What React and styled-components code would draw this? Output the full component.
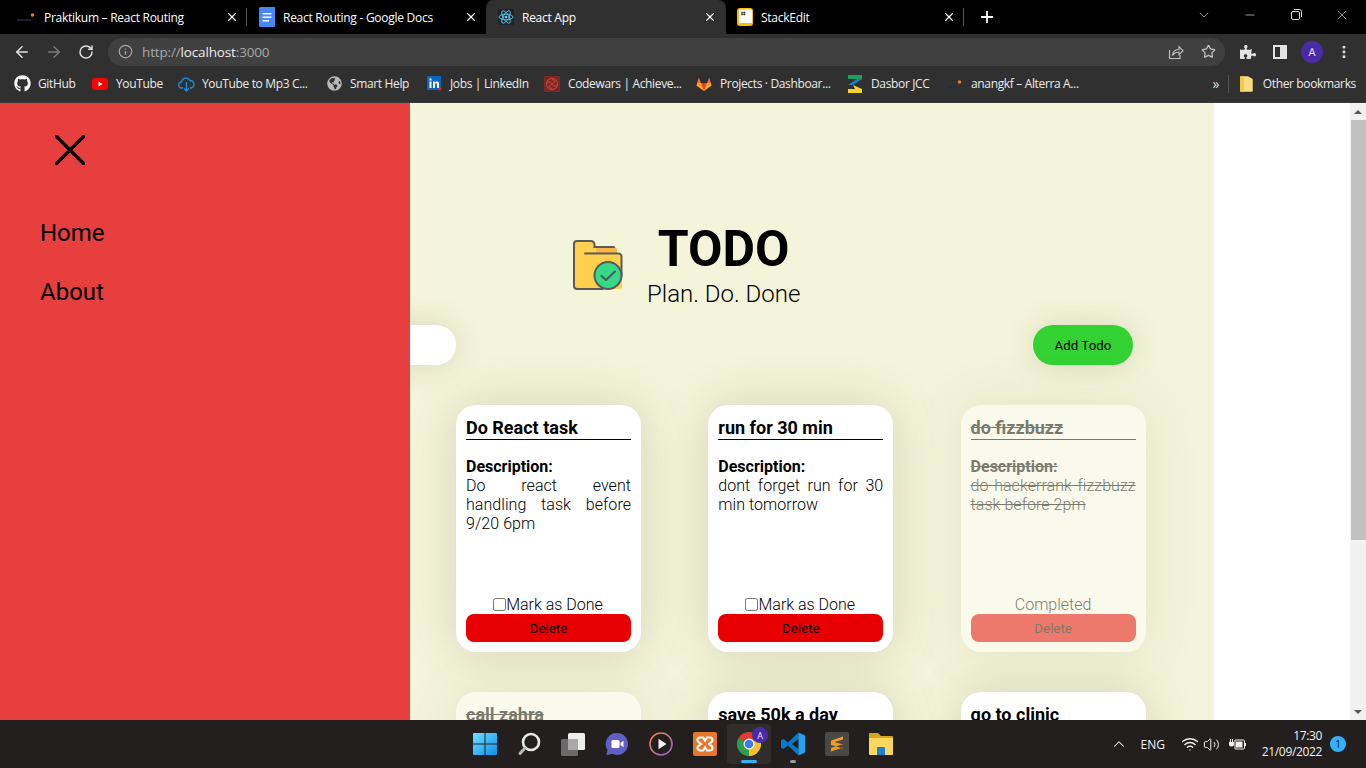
import React from 'react';
import styled, { createGlobalStyle } from 'styled-components';
import { ArrowLeft, ArrowRight, RotateCw, Info, Star, X, Plus, ChevronDown, ChevronUp, Minus, MoreVertical, Wifi, Volume2 } from 'lucide-react';
import { FaGithub, FaPuzzlePiece, FaGlobeAmericas } from 'react-icons/fa';

const GlobalStyle = createGlobalStyle`
  html, body {
    margin: 0;
    height: 100%;
    overflow: hidden;
    font-family: Roboto, "Liberation Sans", sans-serif;
  }
`;

const Screen = styled.div`
  width: 1366px;
  height: 768px;
  display: flex;
  flex-direction: column;
  overflow: hidden;
  background: #fff;
`;

/* browser chrome */
const TabStrip = styled.div`
  height: 34px;
  flex: none;
  background: #000;
  display: flex;
  padding-left: 8px;
  color: #fff;
  font: 12px "Open Sans", sans-serif;
`;

const Tab = styled.div`
  width: ${p => p.$w}px;
  box-sizing: border-box;
  display: flex;
  align-items: center;
  padding: 0 ${p => p.$pr}px 0 ${p => p.$pl}px;
  gap: 8px;
  position: relative;
  background: ${p => (p.$active ? '#303030' : 'transparent')};
  border-radius: ${p => (p.$active ? '8px 8px 0 0' : '0')};
  &::after {
    content: '';
    display: ${p => (p.$sep ? 'block' : 'none')};
    position: absolute;
    right: 0;
    top: 8px;
    bottom: 8px;
    width: 1px;
    background: #555;
  }
`;

const TabTitle = styled.span`
  flex: 1;
  white-space: nowrap;
  overflow: hidden;
  letter-spacing: -0.27px;
`;

const NewTab = styled.div`
  margin-left: 14px;
  display: flex;
  align-items: center;
`;

const WindowControls = styled.div`
  margin-left: auto;
  display: flex;
  align-items: flex-start;
  color: #ddd;
`;

const WindowButton = styled.div`
  width: 46px;
  height: 29px;
  display: flex;
  align-items: center;
  justify-content: center;
  position: relative;
  left: -1px;
`;

const Toolbar = styled.div`
  height: 35px;
  flex: none;
  background: #303030;
  display: flex;
  align-items: center;
  padding-left: 6px;
  color: #dcdcdc;
`;

const NavButton = styled.div`
  width: 32px;
  display: flex;
  justify-content: center;
  color: ${p => (p.$off ? '#7c7c7c' : '#e0e0e0')};
`;

const AddressBar = styled.div`
  margin-left: 6px;
  width: 1117px;
  height: 28px;
  box-sizing: border-box;
  border-radius: 14px;
  background: #404040;
  display: flex;
  align-items: center;
  padding: 0 1px 0 10px;
  font: 13.5px "Open Sans", sans-serif;
  letter-spacing: -0.15px;
  color: #a8a8a8;
  gap: 9px;
`;

const Url = styled.span`
  flex: 1;
  b {
    font-weight: 400;
    color: #ececec;
  }
`;

const AddressActions = styled.div`
  display: flex;
`;

const AddressAction = styled.div`
  width: 32px;
  display: flex;
  justify-content: center;
  color: #c4c4c4;
`;

const ToolbarActions = styled.div`
  margin-left: 7px;
  display: flex;
  align-items: center;
`;

const ToolbarAction = styled.div`
  width: 32px;
  display: flex;
  justify-content: center;
  color: #e2e2e2;
`;

const Avatar = styled.div`
  width: 22px;
  height: 22px;
  border-radius: 50%;
  background: #4a2ba6;
  color: #e8e4f8;
  font: 11px "Open Sans", sans-serif;
  display: flex;
  align-items: center;
  justify-content: center;
`;

const Bookmarks = styled.div`
  height: 34px;
  flex: none;
  box-sizing: border-box;
  background: #303030;
  border-bottom: 1px solid #3c3c3c;
  display: flex;
  align-items: center;
  padding: 0 0 4px 14px;
  color: #ececec;
  font: 12px "Open Sans", sans-serif;
  letter-spacing: -0.35px;
`;

const Bookmark = styled.div`
  width: ${p => p.$w}px;
  flex: none;
  display: flex;
  align-items: center;
  gap: ${p => p.$gap || 8}px;
  white-space: nowrap;
`;

const BookmarkEnd = styled.div`
  margin-left: auto;
  display: flex;
  align-items: center;
  padding-right: 10px;
`;

const Overflow = styled.span`
  font-size: 14px;
  color: #ddd;
  margin-right: 9px;
`;

const Divider = styled.span`
  width: 1px;
  height: 18px;
  background: #555;
  margin-right: 11px;
`;

/* page */
const Content = styled.div`
  flex: 1;
  min-height: 0;
  position: relative;
  display: flex;
  overflow: hidden;
`;

const Sidebar = styled.aside`
  position: absolute;
  z-index: 2;
  left: 0;
  top: 0;
  bottom: 0;
  width: 410px;
  box-sizing: border-box;
  background: #e73e3e;
  padding: 32px 0 0 40px;
`;

const CloseIcon = styled.svg`
  display: block;
  margin: 0 0 54px 15px;
`;

const NavLink = styled.div`
  font-size: 24px;
  line-height: 28px;
  color: #000;
  margin-bottom: 31px;
`;

const Main = styled.main`
  width: 1214px;
  flex: none;
  box-sizing: border-box;
  background: #f4f4da;
  padding-top: 118px;
`;

const Header = styled.header`
  display: flex;
  align-items: center;
  padding-left: 573px;
  gap: 24px;
`;

const HeaderText = styled.div`
  text-align: center;
  width: 153px;
`;

const Title = styled.h1`
  margin: 0 0 3px;
  font-size: 50px;
  line-height: 56px;
  font-weight: 700;
  color: #000;
`;

const Subtitle = styled.div`
  font-size: 24px;
  line-height: 28px;
  font-weight: 300;
  white-space: nowrap;
  color: #000;
`;

const AddRow = styled.div`
  display: flex;
  justify-content: space-between;
  padding: 0 81px 0 85px;
  margin: 17px 0 40px;
`;

const TodoInput = styled.div`
  width: 371px;
  height: 40px;
  background: #fff;
  border-radius: 20px;
  box-shadow: 0 0 30px rgba(90, 90, 50, 0.18);
`;

const AddButton = styled.div`
  width: 100px;
  height: 40px;
  border-radius: 20px;
  background: #32d232;
  color: #000;
  font-size: 13.33px;
  display: flex;
  align-items: center;
  justify-content: center;
  box-shadow: 0 0 30px rgba(90, 90, 50, 0.18);
`;

const CardGrid = styled.div`
  display: grid;
  grid-template-columns: repeat(3, 185px);
  column-gap: 67.3px;
  row-gap: 40px;
  padding-left: 456px;
`;

const Card = styled.article`
  height: 247px;
  box-sizing: border-box;
  padding: 10px;
  background: #fff;
  border-radius: 20px;
  box-shadow: 0 0 50px rgba(90, 90, 50, 0.2);
  display: flex;
  flex-direction: column;
  color: #000;
  opacity: ${p => (p.$done ? 0.5 : 1)};
`;

const CardTitle = styled.h3`
  margin: 0 0 17px;
  padding-top: 2px;
  font-size: 18px;
  line-height: 22px;
  font-weight: 700;
  border-bottom: 1px solid #000;
  text-decoration: ${p => (p.$done ? 'line-through' : 'none')};
`;

const CardBody = styled.div`
  flex: 1;
  font-size: 16px;
  line-height: 19px;
  text-align: justify;
  font-weight: 300;
  letter-spacing: 0.05px;
  text-decoration: ${p => (p.$done ? 'line-through' : 'none')};
  strong {
    display: block;
    font-weight: 700;
    letter-spacing: 0;
  }
`;

const CardStatus = styled.label`
  font-size: 16px;
  line-height: 19px;
  font-weight: 300;
  text-align: center;
  padding-right: ${p => (p.$done ? 0 : 1)}px;
  input {
    margin: 0;
    width: 13px;
    height: 13px;
    vertical-align: -1px;
  }
`;

const DeleteButton = styled.div`
  height: 28px;
  flex: none;
  border-radius: 8px;
  background: #e80000;
  color: #000;
  font-size: 13.33px;
  display: flex;
  align-items: center;
  justify-content: center;
`;

const Scrollbar = styled.div`
  margin-left: auto;
  width: 16px;
  flex: none;
  background: #f1f1f1;
  display: flex;
  flex-direction: column;
  align-items: center;
`;

const ScrollArrow = styled.div`
  height: 17px;
  flex: none;
  display: flex;
  align-items: center;
  justify-content: center;
  margin-top: ${p => (p.$down ? 'auto' : '0')};
  &::before {
    content: '';
    border-left: 4px solid transparent;
    border-right: 4px solid transparent;
    ${p => (p.$down ? 'border-top' : 'border-bottom')}: 4px solid #555;
  }
`;

const ScrollThumb = styled.div`
  width: 15px;
  height: 420px;
  background: #c1c1c1;
  margin-left: 1px;
`;

/* windows taskbar */
const Taskbar = styled.footer`
  height: 48px;
  flex: none;
  background: #231f1f;
  display: grid;
  grid-template-columns: 1fr auto 1fr;
  align-items: center;
  color: #f2f2f2;
  font: 12px "Open Sans", sans-serif;
`;

const TaskIcons = styled.div`
  grid-column: 2;
  display: flex;
`;

const TaskSlot = styled.div`
  width: 44px;
  height: 40px;
  display: flex;
  align-items: center;
  justify-content: center;
  position: relative;
  box-sizing: border-box;
  border-radius: 4px;
  background: ${p => (p.$active ? '#302d2d' : 'transparent')};
  &::after {
    content: '';
    display: ${p => (p.$mark ? 'block' : 'none')};
    position: absolute;
    bottom: 1px;
    left: 50%;
    transform: translateX(-50%);
    height: 3px;
    border-radius: 2px;
    width: ${p => (p.$mark === 'open' ? '6px' : '16px')};
    background: ${p => (p.$mark === 'open' ? '#9a9a9a' : '#35b0f5')};
  }
`;

const TaskBadge = styled.span`
  position: absolute;
  top: 3px;
  right: 3px;
  width: 16px;
  height: 16px;
  border-radius: 50%;
  background: #4a2ba6;
  color: #e8e4f8;
  font-size: 9px;
  display: flex;
  align-items: center;
  justify-content: center;
`;

const Tray = styled.div`
  grid-column: 3;
  display: flex;
  align-items: center;
  justify-content: flex-end;
  padding-right: 20px;
`;

const TrayItem = styled.div`
  width: ${p => p.$w}px;
  flex: none;
  display: flex;
  justify-content: center;
  align-items: center;
`;

const Clock = styled.div`
  text-align: right;
  line-height: 16px;
  letter-spacing: -0.35px;
  white-space: nowrap;
  margin-left: 8px;
`;

const Notification = styled.div`
  width: 16px;
  height: 16px;
  margin-left: 8px;
  border-radius: 50%;
  background: #35b0f5;
  color: #123;
  font-size: 10px;
  display: flex;
  align-items: center;
  justify-content: center;
`;

const Alterra = ({ size = 16 }) => (
  <svg width={size} height="16" viewBox={`0 0 ${size} 16`}>
    <path d={`M1 11h${size - 6}`} stroke="#1c2c4c" strokeWidth="1.500" />
    <circle cx={size - 3.500} cy="6" r="1.800" fill="#f47b20" />
  </svg>
);

const Docs = () => (
  <svg width="16" height="20" viewBox="0 0 16 20">
    <path d="M1.500 0H16v18.500a1.500 1.500 0 0 1-1.500 1.500h-13A1.500 1.500 0 0 1 0 18.500v-17A1.500 1.500 0 0 1 1.500 0z" fill="#4688f4" />
    <path d="M3.500 6h9v1.600h-9zM3.500 9.500h9v1.600h-9zM3.500 13h6.500v1.600H3.500z" fill="#fff" />
  </svg>
);

const ReactLogo = () => (
  <svg width="16" height="16" viewBox="0 0 16 16" fill="none" stroke="#61dafb" strokeWidth=".8">
    <rect x="0" y="0" width="16" height="16" rx="2" fill="#20232a" stroke="none" />
    <ellipse cx="8" cy="8" rx="7" ry="2.800" />
    <ellipse cx="8" cy="8" rx="7" ry="2.800" transform="rotate(60 8 8)" />
    <ellipse cx="8" cy="8" rx="7" ry="2.800" transform="rotate(120 8 8)" />
    <circle cx="8" cy="8" r="1.300" fill="#61dafb" stroke="none" />
  </svg>
);

const StackEdit = () => (
  <svg width="16" height="18" viewBox="0 0 16 18">
    <rect width="16" height="18" rx="3" fill="#fbbc05" />
    <path d="M2 1.500h12a1 1 0 0 1 1 1V15H3a1 1 0 0 1-1-1z" fill="#fff" />
    <path d="M5 3.500v4M7.300 3.500v4M3.800 4.700h4.800M3.800 6.300h4.800" stroke="#333" strokeWidth=".8" />
  </svg>
);

const Share = () => (
  <svg width="16" height="16" viewBox="0 0 16 16" fill="none" stroke="currentColor" strokeWidth="1.100">
    <path d="M1.500 6v8.500h10.500V11" />
    <path d="M4.500 11c.5-3.500 3-5.500 6.500-5.500V2.500l4 4.200-4 4V8c-2.500 0-4.500 1-6.500 3z" />
  </svg>
);

const SidePanel = () => (
  <svg width="14" height="14" viewBox="0 0 14 14">
    <path d="M0 0h14v14H0zM2 2v10h5V2z" fill="#e2e2e2" fillRule="evenodd" />
  </svg>
);

const YouTube = () => (
  <svg width="16" height="12" viewBox="0 0 16 12">
    <rect width="16" height="12" rx="3" fill="#f00" />
    <path d="M6.500 3.500v5L10.500 6z" fill="#fff" />
  </svg>
);

const CloudDown = () => (
  <svg width="17" height="16" viewBox="0 0 17 16" fill="none" stroke="#1b8fd6" strokeWidth="1.300">
    <path d="M5 12H4a3 3 0 0 1-.5-6A4.500 4.500 0 0 1 12 4.500 3.800 3.800 0 0 1 13 12h-1" />
    <path d="M8.500 6v9M6 12.500l2.500 2.500 2.500-2.500" />
  </svg>
);

const LinkedIn = () => (
  <svg width="15" height="15" viewBox="0 0 15 15">
    <rect width="14" height="14" fill="#0a66c2" />
    <path d="M2.500 5.500h2V12h-2zM2.500 2.500h2v2h-2zM6 5.500h1.900v1c.9-1.600 4.100-1.600 4.100 1.300V12h-2V8.300c0-1.400-2-1.300-2 0V12H6z" fill="#fff" />
    <circle cx="13" cy="13" r="1.600" fill="#e0202c" />
  </svg>
);

const Codewars = () => (
  <svg width="16" height="16" viewBox="0 0 16 16" fill="none" stroke="#e0453a" strokeWidth=".9">
    <rect width="16" height="16" fill="#7a2a22" stroke="none" />
    <circle cx="8" cy="8" r="5.500" />
    <path d="M8 2.500c3 2 3 4 0 5.500s-3 3.500 0 5.500M2.500 8c2-3 4-3 5.500 0s3.500 3 5.500 0" />
  </svg>
);

const GitLab = () => (
  <svg width="16" height="16" viewBox="0 0 16 16">
    <path d="M8 15L.5 9.500 2.800 1.500l2.300 6h5.800l2.300-6 2.300 8z" fill="#fc6d26" />
    <path d="M8 15L5.100 7.500h5.800z" fill="#e24329" />
    <path d="M8 15L.5 9.500l1-3 3.600 1z" fill="#fca326" />
    <path d="M8 15l7.500-5.500-1-3-3.600 1z" fill="#fca326" />
  </svg>
);

const Dasbor = () => (
  <svg width="16" height="20" viewBox="0 0 16 20">
    <path d="M1 1h14v4H1z" fill="#19a05c" />
    <path d="M15 5L6 11H1l9-6z" fill="#1a7fc1" />
    <path d="M6 11l9 4v4H1v-4l7 0-2-4z" fill="#f5d327" />
  </svg>
);

const Folder = () => (
  <svg width="13" height="16" viewBox="0 0 13 16">
    <path d="M1 0h7l5 3v12a1 1 0 0 1-1 1H1a1 1 0 0 1-1-1V1a1 1 0 0 1 1-1z" fill="#fbdc85" />
    <path d="M0 1a1 1 0 0 1 1-1h3v16H1a1 1 0 0 1-1-1z" fill="#f7c948" />
  </svg>
);

const TodoLogo = () => (
  <svg width="50" height="50" viewBox="0 0 50 50" fill="none">
    <path d="M23 7h18a3 3 0 0 1 3 3v5H23z" fill="#fbb545" />
    <path d="M2 4a3 3 0 0 1 3-3h14a3 3 0 0 1 3 3v3l2 6.500h22a3 3 0 0 1 3 3V46a3 3 0 0 1-3 3H4a3 3 0 0 1-3-3z" fill="#ffd04d" />
    <path d="M48.500 36V16.500a3 3 0 0 0-3-3H12M30 49H4a3 3 0 0 1-3-3V4a3 3 0 0 1 3-3h14a3.500 3.500 0 0 1 3.500 3.500V7H41" stroke="#5a5a5a" strokeWidth="2" strokeLinecap="round" />
    <circle cx="35" cy="35.500" r="13.500" fill="#34d98a" stroke="#5a5a5a" strokeWidth="2" />
    <path d="M28.500 36l4.500 4 9-8.500" stroke="#4a5a52" strokeWidth="2" strokeLinecap="round" strokeLinejoin="round" />
  </svg>
);

const WindowsLogo = () => (
  <svg width="24" height="24" viewBox="0 0 24 24">
    <defs>
      <linearGradient id="win" x1="0" y1="0" x2="1" y2="1">
        <stop offset="0" stopColor="#6fe0ff" />
        <stop offset="1" stopColor="#0f8fe8" />
      </linearGradient>
    </defs>
    <path d="M1 1h10.500v10.500H0V2a1 1 0 0 1 1-1zM12.500 1H23a1 1 0 0 1 1 1v9.500H12.500zM0 12.500h11.500V23H1a1 1 0 0 1-1-1zM12.500 12.500H24V22a1 1 0 0 1-1 1H12.500z" fill="url(#win)" />
  </svg>
);

const SearchIcon = () => (
  <svg width="24" height="24" viewBox="0 0 24 24" fill="none">
    <circle cx="14" cy="10" r="8" stroke="#e8e8e8" strokeWidth="2.600" />
    <path d="M8 16l-5 5.500" stroke="#b8b8b8" strokeWidth="3" strokeLinecap="round" />
  </svg>
);

const TaskView = () => (
  <svg width="24" height="24" viewBox="0 0 24 24">
    <rect x="7" y="1" width="17" height="17" rx="1.500" fill="#eee" />
    <rect x="0" y="7" width="17" height="17" rx="1.500" fill="#6a6a6a" />
    <rect x="7" y="7" width="10" height="11" fill="#a8a8a8" />
  </svg>
);

const MeetIcon = () => (
  <svg width="24" height="24" viewBox="0 0 24 24">
    <path d="M12 1a11 11 0 1 1-5 20.800L2.500 23c-.8.200-1.200-.4-1-1l1-4A11 11 0 0 1 12 1z" fill="#5f5fc4" />
    <rect x="6.500" y="8" width="8" height="8" rx="1.500" fill="#fff" />
    <path d="M15.500 11l3-2.200v6.400l-3-2.200z" fill="#fff" />
  </svg>
);

const PlayerIcon = () => (
  <svg width="24" height="24" viewBox="0 0 24 24">
    <defs>
      <linearGradient id="ring" x1="0" y1="0" x2="1" y2="1">
        <stop offset="0" stopColor="#f08a3c" />
        <stop offset="1" stopColor="#9a5cc8" />
      </linearGradient>
    </defs>
    <circle cx="12" cy="12" r="11" fill="none" stroke="url(#ring)" strokeWidth="1.600" />
    <path d="M9.500 6.800v10.400l8-5.200z" fill="#f2f2f2" />
  </svg>
);

const XamppIcon = () => (
  <svg width="24" height="24" viewBox="0 0 24 24">
    <rect width="24" height="24" rx="2" fill="#e8762d" />
    <path d="M7 5.500h3l2 3 2-3h3a2.500 2.500 0 0 1 1.500 4.500L16 12l2.500 2a2.500 2.500 0 0 1-1.500 4.500h-3l-2-3-2 3H7A2.500 2.500 0 0 1 5.500 14L8 12 5.500 10A2.500 2.500 0 0 1 7 5.500z" fill="none" stroke="#fff" strokeWidth="2.200" />
  </svg>
);

const ChromeIcon = () => (
  <svg width="24" height="24" viewBox="0 0 24 24">
    <path d="M12 12L1.600 6A12 12 0 0 1 22.400 6z" fill="#e33b2e" />
    <path d="M12 12L22.400 6A12 12 0 0 1 12 24z" fill="#fbc02d" />
    <path d="M12 12L12 24A12 12 0 0 1 1.600 6z" fill="#2e9e48" />
    <circle cx="12" cy="12" r="5.500" fill="#fff" />
    <circle cx="12" cy="12" r="4.300" fill="#3b7de8" />
  </svg>
);

const VsCodeIcon = () => (
  <svg width="24" height="24" viewBox="0 0 24 24">
    <path d="M17.500.500L7 10.500 2.500 7 0 8.300v7.400L2.500 17 7 13.500 17.500 23.500V17L10.800 12l6.700-5z" fill="#0a78c8" />
    <path d="M17.500.500L24 3.500v17l-6.500 3z" fill="#23a4ee" />
  </svg>
);

const SublimeIcon = () => (
  <svg width="24" height="24" viewBox="0 0 24 24">
    <rect width="24" height="24" rx="2" fill="#484848" />
    <path d="M18 4.500L6 8.500v4.500l12 3.500v-4L9.500 10 18 7.500zM6 16l12-4v3.500L6 19.500z" fill="#f59a1b" />
  </svg>
);

const ExplorerIcon = () => (
  <svg width="24" height="22" viewBox="0 0 24 22">
    <path d="M1 0h8l3 3h11a1 1 0 0 1 1 1v3H0V1a1 1 0 0 1 1-1z" fill="#d9a520" />
    <path d="M0 5h24v16a1 1 0 0 1-1 1H1a1 1 0 0 1-1-1z" fill="#fcd75c" />
    <path d="M8 15a1 1 0 0 1 1-1h6a1 1 0 0 1 1 1v7H8z" fill="#1d7ed2" />
  </svg>
);

const BatteryIcon = () => (
  <svg width="17" height="14" viewBox="0 0 17 14" fill="#f2f2f2">
    <path d="M6 3h8.500a1 1 0 0 1 1 1v7a1 1 0 0 1-1 1H6z" fill="none" stroke="#f2f2f2" />
    <path d="M7 4.500h6.500v6H7zM16 6h1v3h-1zM0 5h5v2.500a2 2 0 0 1-2 2H2A2 2 0 0 1 0 7.500zM1 2h1v3H1zM3 2h1v3H3z" />
  </svg>
);

const bookmarks = [
  { label: 'GitHub', w: 78, icon: <FaGithub size={17} color="#f4f4f4" />, gap: 7 },
  { label: 'YouTube', w: 86, icon: <YouTube />, gap: 8 },
  { label: 'YouTube to Mp3 C...', w: 149, icon: <CloudDown />, gap: 7 },
  { label: 'Smart Help', w: 100, icon: <FaGlobeAmericas size={15} color="#b8b8b8" />, gap: 8 },
  { label: 'Jobs | LinkedIn', w: 117, icon: <LinkedIn />, gap: 8 },
  { label: 'Codewars | Achieve...', w: 152, icon: <Codewars />, gap: 8 },
  { label: 'Projects · Dashboar...', w: 151, icon: <GitLab />, gap: 8 },
  { label: 'Dasbor JCC', w: 100, icon: <Dasbor />, gap: 8 },
  { label: 'anangkf – Alterra A...', w: 240, icon: <Alterra />, gap: 8 },
];

const todos = [
  { title: 'Do React task', text: 'Do react event handling task before 9/20 6pm' },
  { title: 'run for 30 min', text: 'dont forget run for 30 min tomorrow' },
  { title: 'do fizzbuzz', text: 'do hackerrank fizzbuzz task before 2pm', done: true },
  { title: 'call zahra', done: true },
  { title: 'save 50k a day' },
  { title: 'go to clinic' },
];

const TodoCard = ({ title, text, done }) => (
  <Card $done={done}>
    <CardTitle $done={done}>{title}</CardTitle>
    <CardBody $done={done}>
      <strong>Description:</strong>
      {text}
    </CardBody>
    <CardStatus $done={done}>
      {done ? 'Completed' : <><input type="checkbox" readOnly />Mark as Done</>}
    </CardStatus>
    <DeleteButton>Delete</DeleteButton>
  </Card>
);

export default function App() {
  return (
    <Screen>
      <GlobalStyle />
      <TabStrip>
        <Tab $w={239} $pl={8} $pr={8} $sep>
          <Alterra size={20} />
          <TabTitle>Praktikum – React Routing</TabTitle>
          <X size={14} strokeWidth={2} />
        </Tab>
        <Tab $w={239} $pl={12} $pr={8}>
          <Docs />
          <TabTitle>React Routing - Google Docs</TabTitle>
          <X size={14} strokeWidth={2} />
        </Tab>
        <Tab $w={240} $pl={12} $pr={9} $active>
          <ReactLogo />
          <TabTitle>React App</TabTitle>
          <X size={14} strokeWidth={2} />
        </Tab>
        <Tab $w={238} $pl={11} $pr={8} $sep>
          <StackEdit />
          <TabTitle>StackEdit</TabTitle>
          <X size={14} strokeWidth={2} />
        </Tab>
        <NewTab>
          <Plus size={18} strokeWidth={2.4} />
        </NewTab>
        <WindowControls>
          <WindowButton><ChevronDown size={16} strokeWidth={1} /></WindowButton>
          <WindowButton><Minus size={14} strokeWidth={1.2} /></WindowButton>
          <WindowButton>
            <svg width="11" height="11" viewBox="0 0 11 11" fill="none" stroke="#ddd">
              <rect x=".5" y="2.500" width="8" height="8" rx="1.500" />
              <path d="M3 .5h5.500a2 2 0 0 1 2 2V8" />
            </svg>
          </WindowButton>
          <WindowButton><X size={16} strokeWidth={1} /></WindowButton>
        </WindowControls>
      </TabStrip>

      <Toolbar>
        <NavButton><ArrowLeft size={18} /></NavButton>
        <NavButton $off><ArrowRight size={18} /></NavButton>
        <NavButton><RotateCw size={16} strokeWidth={2.2} /></NavButton>
        <AddressBar>
          <Info size={15} />
          <Url>http://<b>localhost</b>:3000</Url>
          <AddressActions>
            <AddressAction><Share /></AddressAction>
            <AddressAction><Star size={15} /></AddressAction>
          </AddressActions>
        </AddressBar>
        <ToolbarActions>
          <ToolbarAction><FaPuzzlePiece size={16} /></ToolbarAction>
          <ToolbarAction><SidePanel /></ToolbarAction>
          <ToolbarAction><Avatar>A</Avatar></ToolbarAction>
          <ToolbarAction><MoreVertical size={16} strokeWidth={2.4} /></ToolbarAction>
        </ToolbarActions>
      </Toolbar>

      <Bookmarks>
        {bookmarks.map(b => (
          <Bookmark key={b.label} $w={b.w} $gap={b.gap}>
            {b.icon}
            {b.label}
          </Bookmark>
        ))}
        <BookmarkEnd>
          <Overflow>»</Overflow>
          <Divider />
          <Bookmark $w={116} $gap={10}>
            <Folder />
            Other bookmarks
          </Bookmark>
        </BookmarkEnd>
      </Bookmarks>

      <Content>
        <Sidebar>
          <CloseIcon width="30" height="30" viewBox="0 0 30 30" stroke="#000" strokeWidth="3.200" strokeLinecap="round">
            <path d="M1.500 1.500l27 27M28.500 1.500l-27 27" />
          </CloseIcon>
          <NavLink>Home</NavLink>
          <NavLink>About</NavLink>
        </Sidebar>
        <Main>
          <Header>
            <TodoLogo />
            <HeaderText>
              <Title>TODO</Title>
              <Subtitle>Plan. Do. Done</Subtitle>
            </HeaderText>
          </Header>
          <AddRow>
            <TodoInput />
            <AddButton>Add Todo</AddButton>
          </AddRow>
          <CardGrid>
            {todos.map(t => <TodoCard key={t.title} {...t} />)}
          </CardGrid>
        </Main>
        <Scrollbar>
          <ScrollArrow />
          <ScrollThumb />
          <ScrollArrow $down />
        </Scrollbar>
      </Content>

      <Taskbar>
        <TaskIcons>
          <TaskSlot><WindowsLogo /></TaskSlot>
          <TaskSlot><SearchIcon /></TaskSlot>
          <TaskSlot><TaskView /></TaskSlot>
          <TaskSlot><MeetIcon /></TaskSlot>
          <TaskSlot><PlayerIcon /></TaskSlot>
          <TaskSlot><XamppIcon /></TaskSlot>
          <TaskSlot $active $mark="active"><ChromeIcon /><TaskBadge>A</TaskBadge></TaskSlot>
          <TaskSlot $mark="open"><VsCodeIcon /></TaskSlot>
          <TaskSlot><SublimeIcon /></TaskSlot>
          <TaskSlot><ExplorerIcon /></TaskSlot>
        </TaskIcons>
        <Tray>
          <TrayItem $w={18}><ChevronUp size={18} strokeWidth={1.4} /></TrayItem>
          <TrayItem $w={50}>ENG</TrayItem>
          <TrayItem $w={24}><Wifi size={18} strokeWidth={1.8} /></TrayItem>
          <TrayItem $w={20}><Volume2 size={17} strokeWidth={1.4} /></TrayItem>
          <TrayItem $w={32}><BatteryIcon /></TrayItem>
          <Clock>17:30<br />21/09/2022</Clock>
          <Notification>1</Notification>
        </Tray>
      </Taskbar>
    </Screen>
  );
}
